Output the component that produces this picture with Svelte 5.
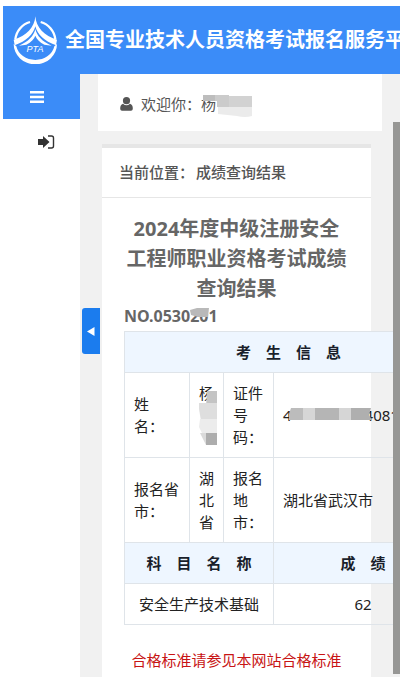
<script>
  const siteName = '全国专业技术人员资格考试报名服务平台';
  const subjects = [{ name: '安全生产技术基础', score: '62' }];
</script>

<div class="page">
  <header>
    <svg class="logo" viewBox="36 42 135 144" aria-label="PTA">
      <path d="M87 60A61 61 0 0 0 43 112M119 60A61 61 0 0 1 163 112" fill="none" stroke="#fff" stroke-width="7" />
      <path d="M38 126A65 61 0 0 0 168 126L160 133A58 50 0 0 1 46 133Z" fill="#fff" />
      <path d="M103 43C101 76 76 102 38 113L41 130C76 118 97 97 103 73C109 97 130 118 165 130L168 113C130 102 105 76 103 43Z" fill="#fff" />
      <path d="M103 81C99 101 82 119 54 131L76 128C91 120 99 111 103 101C107 111 115 120 130 128L152 131C124 119 107 101 103 81Z" fill="#fff" />
      <text x="102" y="150" text-anchor="middle">PTA</text>
    </svg>
    <h1>{siteName}</h1>
  </header>

  <div class="body">
    <nav>
      <button class="menu" aria-label="菜单">
        <svg width="14" height="12" viewBox="0 0 14 12"><path d="M0 1.2h14M0 6h14M0 10.8h14" stroke="#fff" stroke-width="2.4" /></svg>
      </button>
      <a class="exit" href="#logout" aria-label="退出">
        <svg width="17" height="14" viewBox="0 0 17 14">
          <path d="M0 4H5V1l6.500 6L5 13V10H0Z" fill="#333" />
          <path d="M10 1h3.500Q15.500 1 15.500 3v8Q15.500 13 13.500 13H10" fill="none" stroke="#333" stroke-width="1.400" />
        </svg>
      </a>
    </nav>

    <main>
      <button class="collapse" aria-label="收起">
        <svg width="8" height="9" viewBox="0 0 8 9"><path d="M0 4.500L7.500 0V9Z" fill="#fff" /></svg>
      </button>

      <div class="welcome">
        <svg width="13" height="14" viewBox="0 0 13 14">
          <circle cx="6.500" cy="3.700" r="3.600" fill="#555" />
          <path d="M3 6.700Q6.500 9.700 10 6.700Q13 7.500 12.800 12Q12.600 13.800 11 13.800H2Q.4 13.800.2 12Q0 7.500 3 6.700Z" fill="#555" />
        </svg>
        <span>欢迎你：</span>
        <span class="masked">杨<svg class="mask name-mask" width="49" height="24" viewBox="0 0 49 24">
          <path d="M0 0H12V6H0Z" fill="#bdbdbd" />
          <path d="M12 0H26V12H14V6H12Z" fill="#cbcbcb" />
          <path d="M26 1H49V12H26Z" fill="#d2d2d2" />
          <path d="M15 12H49V21Q42 23 34 21L15 19Z" fill="#ebebeb" />
        </svg></span>
      </div>

      <section>
        <div class="crumb"><span>当前位置：</span><span>成绩查询结果</span></div>
        <div class="result">
          <h2>2024年度中级注册安全工程师职业资格考试成绩查询结果</h2>
          <div class="number"><span class="masked">NO.0530201<svg class="mask number-mask" width="20" height="10" viewBox="0 0 20 10">
            <path d="M0 2L7 0H19L18 9H8L1 7Z" fill="#b9b9b9" />
          </svg></span></div>

          <table>
            <colgroup><col class="c1" /><col class="c2" /><col class="c3" /><col class="c4" /></colgroup>
            <tbody>
              <tr><th colspan="4">考　生　信　息</th></tr>
              <tr>
                <td>姓<br />名：</td>
                <td class="top"><span class="masked">杨<svg class="mask given-mask" width="22" height="58" viewBox="0 0 22 58">
                  <path d="M8 0H18V16H7Z" fill="#c4c4c4" />
                  <path d="M-1 12H18V30H2Z" fill="#dedede" />
                  <path d="M1 28H18V44H4L0 36Z" fill="#ececec" />
                  <path d="M7 42H18V54H7Z" fill="#adadad" />
                  <path d="M1 42H7V54Z" fill="#dadada" />
                </svg></span></td>
                <td>证件号码：</td>
                <td><span class="masked id"><span>4</span><span>4081</span><svg class="mask id-mask" width="83" height="12" viewBox="0 0 83 12">
                  <path d="M2 0H14V12H0V6Z" fill="#bcbcbc" />
                  <path d="M14 0H26V12H14Z" fill="#d6d6d6" />
                  <path d="M26 0H50V12H26Z" fill="#b5b5b5" />
                  <path d="M50 0H62V12H50Z" fill="#d6d6d6" />
                  <path d="M62 0H82L80 7L83 12H62Z" fill="#afafaf" />
                </svg></span></td>
              </tr>
              <tr>
                <td>报名省市：</td>
                <td>湖北省</td>
                <td>报名地市：</td>
                <td>湖北省武汉市</td>
              </tr>
              <tr><th colspan="3">科　目　名　称</th><th>成　绩</th></tr>
              {#each subjects as s}
                <tr class="score"><td colspan="3">{s.name}</td><td>{s.score}</td></tr>
              {/each}
            </tbody>
          </table>

          <p>合格标准请参见本网站合格标准</p>
        </div>
      </section>
    </main>
  </div>
  <div class="scrollbar"></div>
</div>

<style>
  :global(body) { background: #fff; }
  .page {
    position: relative;
    box-sizing: border-box;
    height: 100vh;
    margin: 0 15px 0 3px;
    padding-top: 6px;
    display: flex;
    flex-direction: column;
    overflow: hidden;
    font: 15px/22px "Noto Sans", "Noto Sans CJK SC", sans-serif;
    color: #222;
  }
  header {
    flex: none;
    display: flex;
    align-items: center;
    gap: 7px;
    height: 68px;
    padding-left: 10px;
    box-sizing: border-box;
    background: #3b8cf8;
    overflow: hidden;
  }
  .logo { flex: none; width: 45px; height: 48px; }
  .logo text { font: italic 27px "Liberation Sans", sans-serif; fill: #fff; }
  h1 {
    margin: 0;
    font-size: 20px;
    line-height: 28px;
    font-weight: 700;
    color: #fff;
    white-space: nowrap;
  }
  .body { flex: 1; display: flex; min-height: 0; }
  nav { flex: none; width: 77px; background: #fff; }
  button { border: 0; padding: 0; font: inherit; cursor: pointer; }
  .menu {
    display: flex;
    width: 100%;
    height: 45px;
    align-items: center;
    justify-content: center;
    padding-right: 9px;
    background: #3b8cf8;
  }
  .exit { display: flex; justify-content: center; padding: 16px 0 0 9px; }
  main {
    position: relative;
    flex: 1;
    min-width: 0;
    padding: 0 18px;
    background: #f1f1f1;
  }
  .collapse {
    position: absolute;
    left: 2px;
    top: 234px;
    width: 18px;
    height: 46px;
    display: flex;
    align-items: center;
    justify-content: center;
    border-radius: 3px 0 0 3px;
    background: #1b7cee;
  }
  .welcome {
    display: flex;
    align-items: center;
    height: 57px;
    padding: 2px 0 0 22px;
    box-sizing: border-box;
    background: #fff;
    color: #555;
  }
  .welcome > svg { margin-right: 8px; }
  .masked { position: relative; display: inline-block; }
  .mask { position: absolute; }
  .name-mask { left: 2px; top: 2px; }
  .number-mask { left: 66px; top: 4px; }
  .given-mask { left: 0; top: 9px; }
  .id-mask { left: 6px; top: 4px; }
  section {
    margin: 13px 11px 0 4px;
    border-top: 4px solid #e6e6e6;
    background: #fff;
    min-height: 100%;
  }
  .crumb {
    display: flex;
    gap: 2px;
    padding: 13px 17px 14px;
    border-bottom: 1px solid #e6e6e6;
    color: #555;
    font-weight: 500;
  }
  .result { padding: 16px 22px; }
  h2 {
    margin: 0;
    font-size: 20px;
    line-height: 30px;
    font-weight: 700;
    text-align: center;
    color: #666;
  }
  .number { font-size: 16px; line-height: 24px; height: 27px; font-weight: 700; color: #666; }
  table {
    width: 329px;
    table-layout: fixed;
    border-collapse: collapse;
  }
  .c1 { width: 65px; }
  .c2 { width: 34px; }
  .c3 { width: 50px; }
  th, td { padding: 9px; border: 1px solid #dfe4e9; text-align: left; }
  th { padding: 9px 0; text-align: center; background: #eef6ff; color: #1a1f2b; font-weight: 700; }
  .score td { text-align: center; }
  .top { vertical-align: top; }
  .id { display: inline-flex; gap: 73px; }
  p { margin: 24px 0; text-align: center; color: #c81414; white-space: nowrap; }
  .scrollbar {
    position: absolute;
    right: 0;
    top: 122px;
    bottom: 3px;
    width: 7px;
    background: #979795;
  }
</style>
